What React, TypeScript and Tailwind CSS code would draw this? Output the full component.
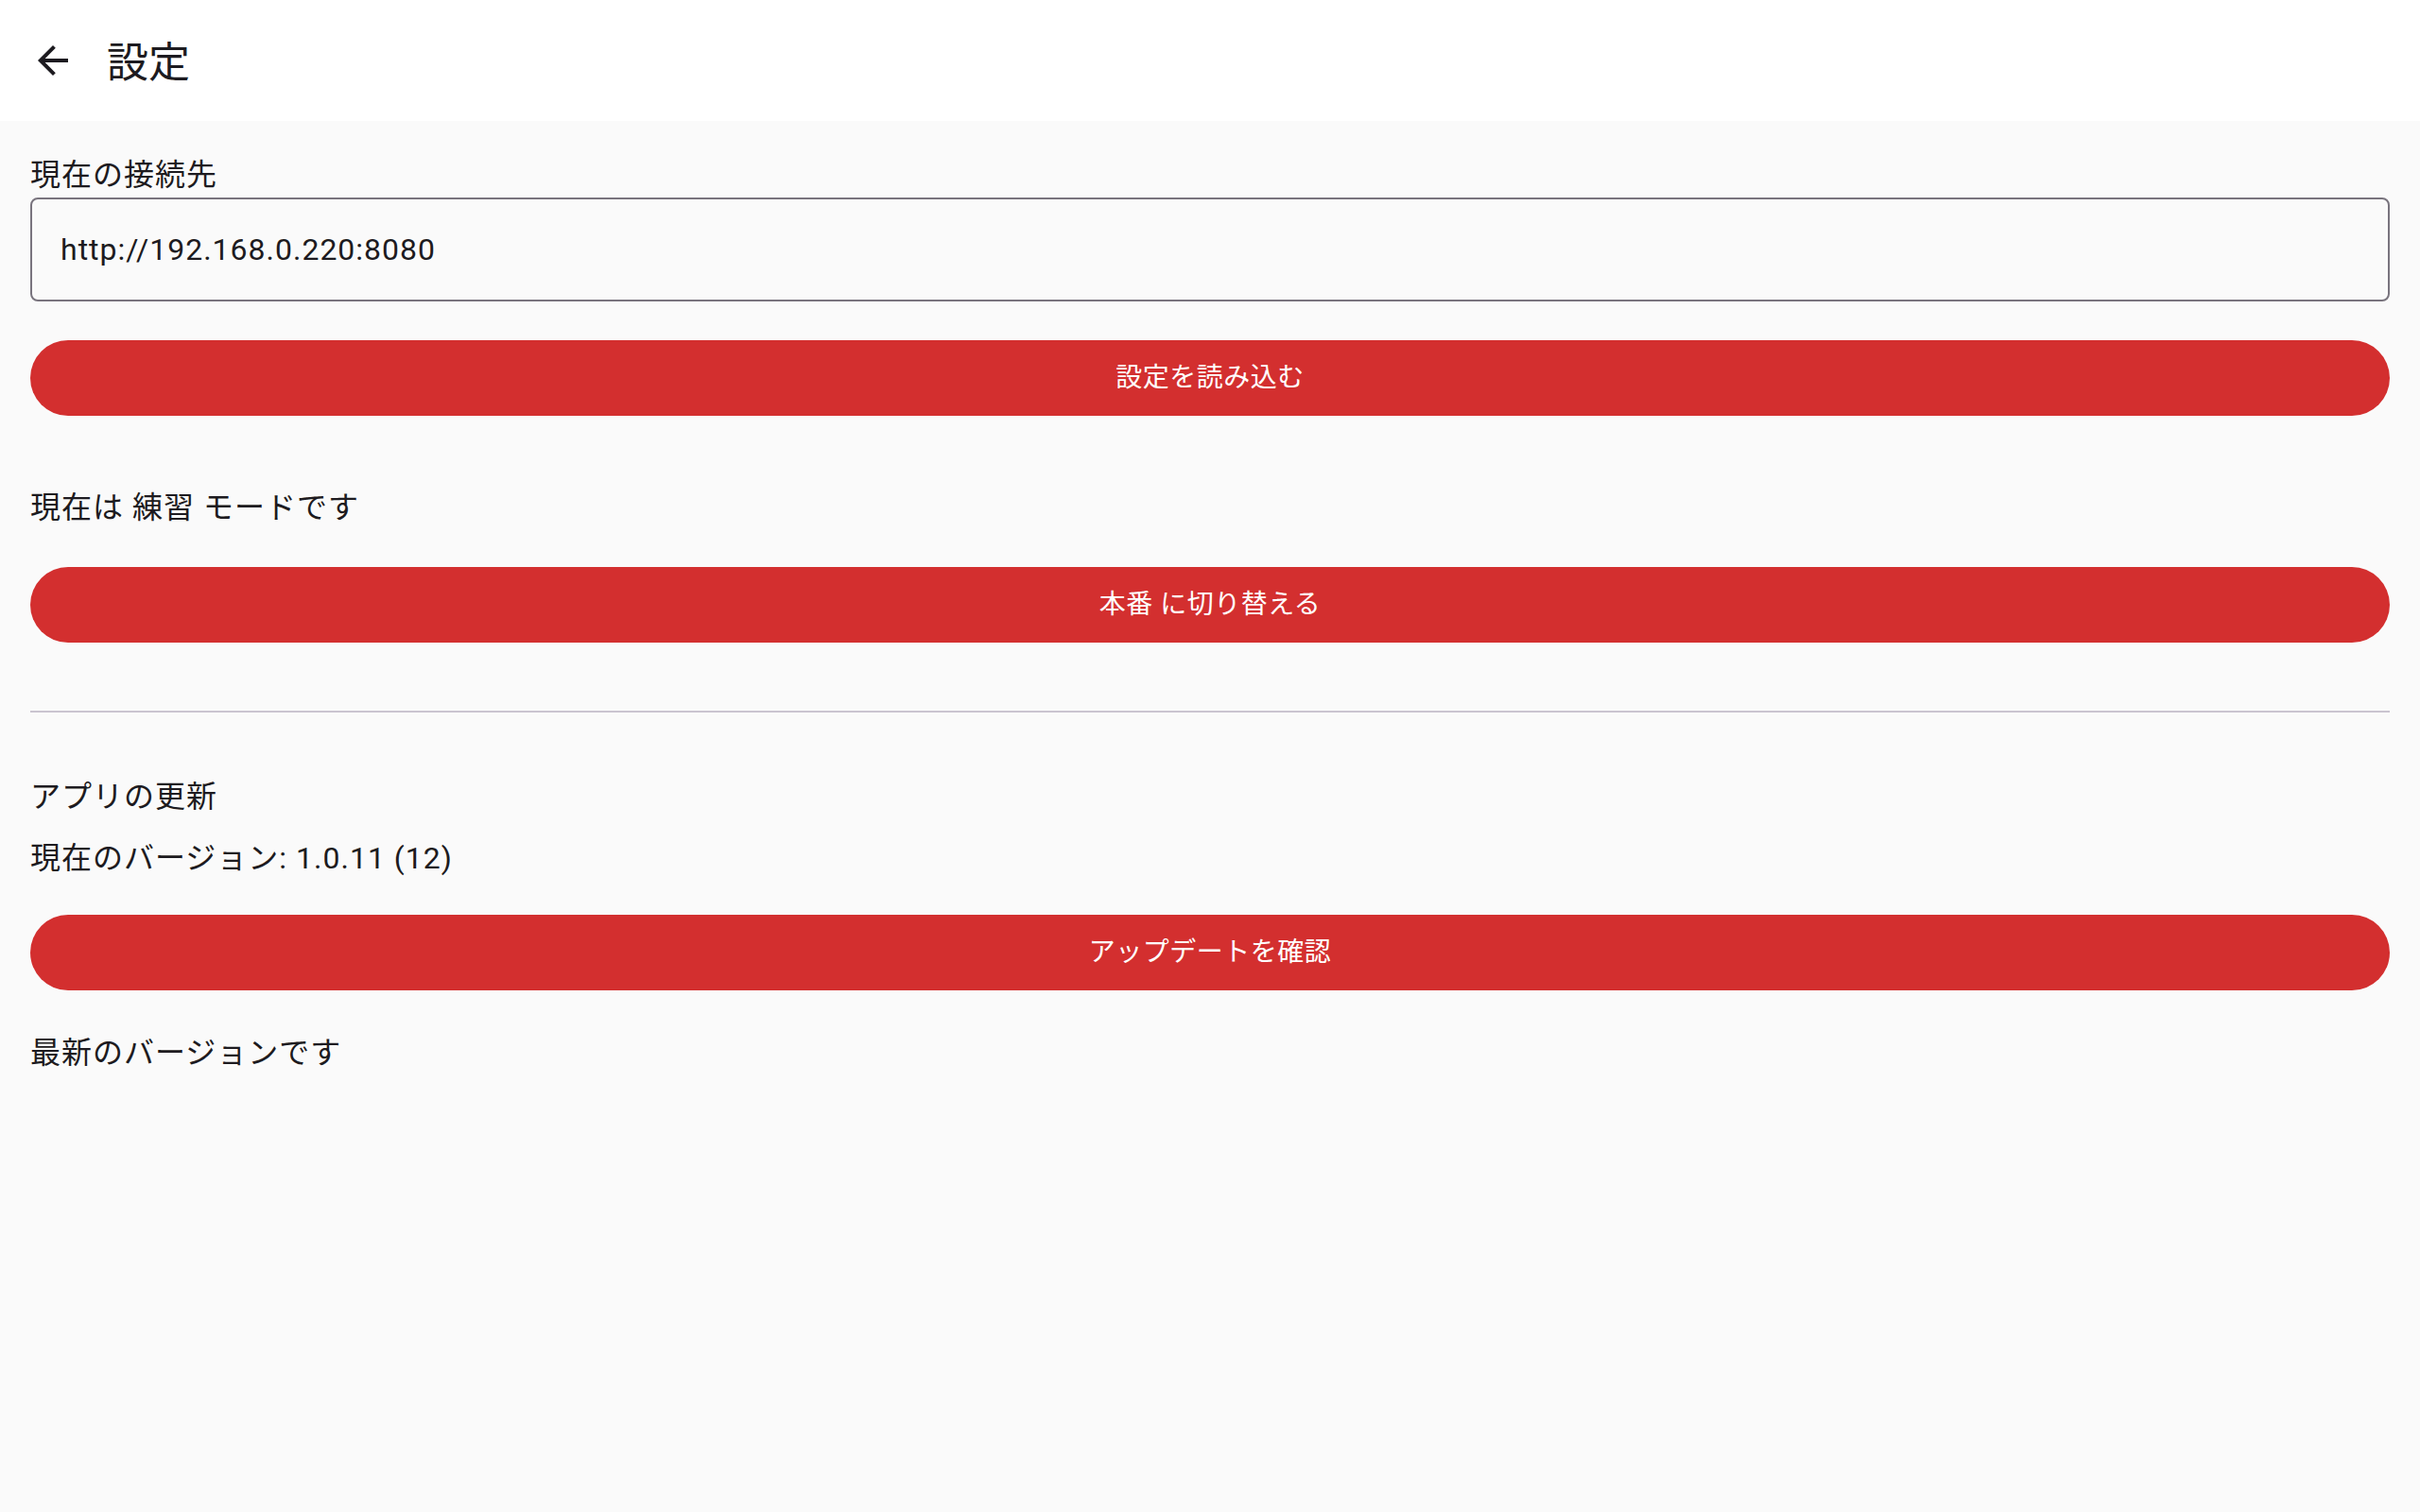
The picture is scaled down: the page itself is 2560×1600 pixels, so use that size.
import type { FC } from "react";

const ink = "text-[#1d1b20]";
const body = "text-[32px] leading-[48px] tracking-[1px]";

const RedButton: FC<{ label: string; className?: string }> = ({ label, className }) => (
  <button
    className={`flex h-[80px] w-full items-center justify-center rounded-full bg-[#d32f2f] text-[28px] font-normal tracking-[0.5px] text-white ${className ?? ""}`}
  >
    {label}
  </button>
);

const App: FC = () => {
  return (
    <div
      className={`flex min-h-screen flex-col bg-[#fafafa] ${ink}`}
      style={{ fontFamily: "Roboto, 'Noto Sans CJK JP', sans-serif" }}
    >
      <header className="flex h-[128px] items-center bg-white">
        <div className="flex w-[112px] items-center justify-center">
          <svg viewBox="0 0 24 24" className="h-[48px] w-[48px] fill-[#1d1b20]">
            <path d="M20 11H7.83l5.59-5.59L12 4l-8 8 8 8 1.41-1.41L7.83 13H20v-2z" />
          </svg>
        </div>
        <h1 className="pt-[5px] pl-[1px] text-[44px] leading-none font-normal">設定</h1>
      </header>

      <main className="flex flex-col px-[32px] pt-[33px]">
        <label className={body}>現在の接続先</label>
        <div className="flex h-[110px] items-center rounded-[8px] border-2 border-[#79747e] px-[30px] text-[32px] tracking-[1px]">
          http://192.168.0.220:8080
        </div>

        <RedButton label="設定を読み込む" className="mt-[41px]" />

        <p className={`mt-[73px] ${body}`}>現在は 練習 モードです</p>

        <RedButton label="本番 に切り替える" className="mt-[39px]" />

        <hr className="mt-[72px] border-t-2 border-[#cac4d0]" />

        <p className={`mt-[65px] ${body}`}>アプリの更新</p>
        <p className={`mt-[17px] ${body}`}>現在のバージョン: 1.0.11 (12)</p>

        <RedButton label="アップデートを確認" className="mt-[36px]" />

        <p className={`mt-[42px] ${body}`}>最新のバージョンです</p>
      </main>
    </div>
  );
};

export default App;
